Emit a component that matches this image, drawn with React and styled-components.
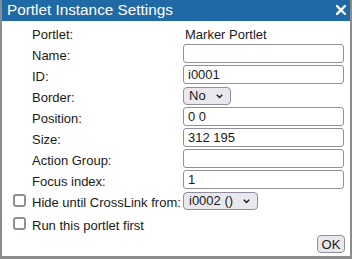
import React from "react";
import styled, { createGlobalStyle } from "styled-components";

const GlobalStyle = createGlobalStyle`
  html, body { margin: 0; padding: 0; background: #ffffff; }
  body { font-family: "Liberation Sans", Arial, sans-serif; }
  * { box-sizing: border-box; }
`;

const Dialog = styled.div`
  width: 352px;
  height: 259px;
  display: flex;
  flex-direction: column;
  background: #ffffff;
  border: 2px solid #8c8c8c;
  border-top: 0;
  border-bottom-width: 3px;
  color: #1a1a1a;
  font-size: 13px;
`;

const TitleBar = styled.div`
  height: 21px;
  flex: none;
  display: flex;
  align-items: center;
  justify-content: space-between;
  padding: 0 3px 1px 5px;
  background: #1f69a6;
  color: #ffffff;
`;

const Title = styled.span`
  font-size: 15.3px;
  line-height: 18px;
`;

const CloseButton = styled.button`
  width: 12px;
  height: 12px;
  padding: 0;
  margin: 0;
  border: 0;
  background: transparent;
  display: flex;
  align-items: center;
  justify-content: center;
  cursor: pointer;
`;

const Form = styled.div`
  display: grid;
  grid-template-columns: 19px 151px 161px;
  grid-auto-rows: 19px;
  row-gap: 2px;
  padding: 2px 0 0 11px;
`;

const Label = styled.label`
  grid-column: ${(p) => (p.$wide ? "2 / 4" : "2")};
  display: flex;
  align-items: center;
  padding-top: 3px;
  white-space: nowrap;
  margin-top: ${(p) => p.$shift || 0}px;
`;

const Value = styled.span`
  grid-column: 3;
  display: flex;
  align-items: center;
  padding: 3px 0 0 2px;
`;

const TextInput = styled.input`
  grid-column: 3;
  width: 161px;
  height: 19px;
  margin: 0;
  padding: 0 4px;
  border: 1px solid #8f8f9d;
  border-radius: 3px;
  font-family: "Liberation Sans", Arial, sans-serif;
  font-size: 13px;
  color: #1a1a1a;
  background: #ffffff;
  outline: none;
`;

const SelectWrap = styled.div`
  grid-column: 3;
  position: relative;
  width: ${(p) => p.$w}px;
  height: 18px;
  align-self: center;
`;

const Select = styled.select`
  appearance: none;
  -webkit-appearance: none;
  width: 100%;
  height: 18px;
  margin: 0;
  padding: 0 0 0 5px;
  border: 1px solid #8f8f9d;
  border-radius: 4px;
  background: #e9e9ed;
  font-family: "Liberation Sans", Arial, sans-serif;
  font-size: 13px;
  color: #1a1a1a;
  outline: none;
`;

const Chevron = styled.svg`
  position: absolute;
  right: 8px;
  top: 7px;
  pointer-events: none;
`;

const Check = styled.input.attrs({ type: "checkbox" })`
  grid-column: 1;
  appearance: none;
  -webkit-appearance: none;
  width: 13px;
  height: 13px;
  margin: 0;
  align-self: center;
  margin-top: ${(p) => p.$shift || 0}px;
  border: 2px solid #8f8f9d;
  border-radius: 3px;
  background: #ffffff;
`;

const Footer = styled.div`
  margin-top: auto;
  display: flex;
  justify-content: flex-end;
  padding: 0 5px 3px 0;
`;

const OkButton = styled.button`
  width: 28px;
  height: 18px;
  margin: 0;
  padding: 0;
  border: 1px solid #8f8f9d;
  border-radius: 4px;
  background: #e9e9ed;
  font-family: "Liberation Sans", Arial, sans-serif;
  font-size: 13px;
  color: #1a1a1a;
`;

function SelectBox({ width, value }) {
  return (
    <SelectWrap $w={width}>
      <Select defaultValue={value}>
        <option value={value}>{value}</option>
      </Select>
      <Chevron width="7" height="5" viewBox="0 0 7 5">
        <path d="M0.8 0.8 L3.5 3.6 L6.2 0.8" fill="none" stroke="#1a1a1a" strokeWidth="1.4" />
      </Chevron>
    </SelectWrap>
  );
}

const fields = [
  { label: "Name:", value: "" },
  { label: "ID:", value: "i0001" },
];

const fields2 = [
  { label: "Position:", value: "0 0" },
  { label: "Size:", value: "312 195" },
  { label: "Action Group:", value: "" },
  { label: "Focus index:", value: "1" },
];

export default function App() {
  return (
    <>
      <GlobalStyle />
      <Dialog>
        <TitleBar>
          <Title>Portlet Instance Settings</Title>
          <CloseButton aria-label="close">
            <svg width="10" height="10" viewBox="0 0 10 10">
              <path d="M1 1 L9 9 M9 1 L1 9" stroke="#ffffff" strokeWidth="2.4" strokeLinecap="square" />
            </svg>
          </CloseButton>
        </TitleBar>
        <Form>
          <Label>Portlet:</Label>
          <Value>Marker Portlet</Value>
          {fields.map((f) => (
            <React.Fragment key={f.label}>
              <Label>{f.label}</Label>
              <TextInput defaultValue={f.value} />
            </React.Fragment>
          ))}
          <Label>Border:</Label>
          <SelectBox width={48} value="No" />
          {fields2.map((f) => (
            <React.Fragment key={f.label}>
              <Label>{f.label}</Label>
              <TextInput defaultValue={f.value} />
            </React.Fragment>
          ))}
          <Check />
          <Label>Hide until CrossLink from:</Label>
          <SelectBox width={75} value="i0002 ()" />
          <Check $shift={4} />
          <Label $wide $shift={4}>Run this portlet first</Label>
        </Form>
        <Footer>
          <OkButton>OK</OkButton>
        </Footer>
      </Dialog>
    </>
  );
}
